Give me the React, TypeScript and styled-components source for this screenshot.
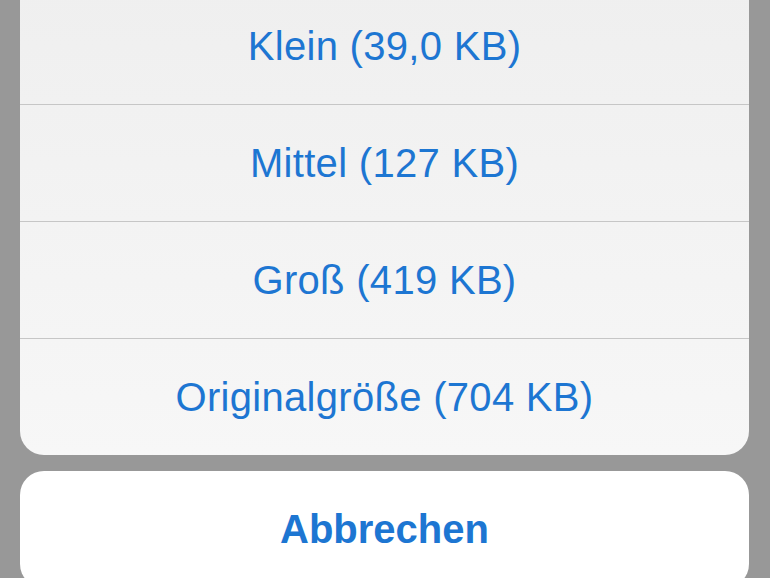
import styled, { createGlobalStyle } from 'styled-components';

const GlobalStyle = createGlobalStyle`
  html, body {
    margin: 0;
    padding: 0;
    background: #989898;
    overflow: hidden;
  }
`;

const Sheet = styled.div`
  display: flex;
  flex-direction: column;
  gap: 16px;
  padding: 0 21px 0 20px;
  margin-top: -12px;
  font-family: "Liberation Sans", Arial, sans-serif;
`;

// the option group continues above the visible area, so only the bottom is rounded
const Group = styled.div`
  display: flex;
  flex-direction: column;
  border-radius: 0 0 24px 24px;
  overflow: hidden;
  background: linear-gradient(180deg, #efefef 0%, #f3f3f3 50%, #f7f7f7 100%);
`;

const Option = styled.div<{ $last?: boolean }>`
  height: 116px;
  display: flex;
  align-items: center;
  justify-content: center;
  font-size: 40px;
  letter-spacing: 0.3px;
  color: #1d76d2;
  border-bottom: ${(p) => (p.$last ? 'none' : '1px solid #c6c6c6')};
`;

const Cancel = styled.div`
  height: 117px;
  display: flex;
  align-items: center;
  justify-content: center;
  border-radius: 24px;
  background: #ffffff;
  font-size: 40px;
  font-weight: bold;
  color: #1d76d2;
`;

const sizes = ['Klein (39,0 KB)', 'Mittel (127 KB)', 'Groß (419 KB)', 'Originalgröße (704 KB)'];

export default function App() {
  return (
    <>
      <GlobalStyle />
      <Sheet>
        <Group>
          {sizes.map((s, i) => (
            <Option key={s} $last={i === sizes.length - 1}>
              {s}
            </Option>
          ))}
        </Group>
        <Cancel>Abbrechen</Cancel>
      </Sheet>
    </>
  );
}
